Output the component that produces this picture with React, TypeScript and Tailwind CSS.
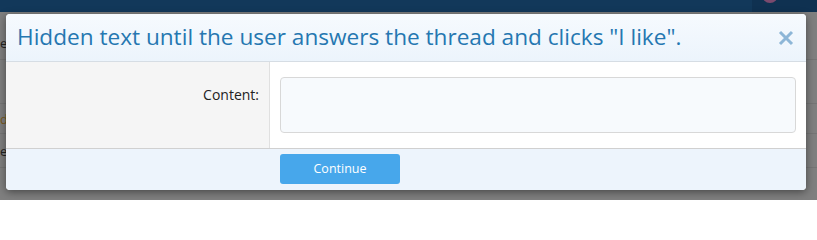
import React from "react";

export default function App() {
  return (
    <div
      className="relative w-[817px] h-[200px] overflow-hidden bg-[#7f7f7f]"
      style={{ fontFamily: '"Open Sans", "Noto Sans", sans-serif' }}
    >
      {/* dimmed page behind */}
      <div className="flex h-[12px] bg-[#12385a]">
        <div className="flex-1" />
        <div className="relative w-[65px] bg-[#0f3151]">
          <div className="absolute left-[10px] top-[-13px] h-[16px] w-[16px] rounded-full bg-[#7b4a6e]" />
        </div>
      </div>
      <div className="flex flex-col text-[13px] text-[#222]">
        <div className="h-[48px] border-b border-[#757575] pt-[22px] leading-[18px]">e</div>
        <div className="h-[44px] border-b border-[#757575]" />
        <div className="h-[30px] border-b border-[#757575] leading-[30px] text-[#7a5a20]">d</div>
        <div className="h-[34px] border-b border-[#757575] pt-[8px] leading-[18px]">e</div>
      </div>

      {/* modal overlay */}
      <div className="absolute left-[6px] top-[14px] flex h-[176px] w-[800px] flex-col overflow-hidden rounded-[4px] bg-white shadow-[0_2px_8px_rgba(0,0,0,0.45)]">
        <div className="flex h-[48px] shrink-0 items-center justify-between border-b border-[#d6dde4] bg-gradient-to-b from-[#f6fafe] to-[#ecf4fc] pl-[11px] pr-[12px]">
          <div className="text-[22.6px] leading-none text-[#2577b1]">
            Hidden text until the user answers the thread and clicks "I like".
          </div>
          <svg width="16" height="16" viewBox="0 0 16 16" className="mt-[1px]">
            <path d="M2 2 L14 14 M14 2 L2 14" stroke="#8db6d7" strokeWidth="3" strokeLinecap="butt" />
          </svg>
        </div>
        <div className="flex h-[87px] shrink-0 border-b border-[#d0d0d0]">
          <div className="flex w-[264px] shrink-0 justify-end border-r border-[#e0e0e0] bg-[#f5f5f5] pr-[10px] pt-[24px]">
            <span className="text-[14px] leading-[18px] text-[#222]">Content:</span>
          </div>
          <div className="flex-1 pl-[10px] pr-[10px] pt-[15px]">
            <div className="h-[56px] w-full rounded-[4px] border border-[#d8d8d8] bg-[#f7fafd]" />
          </div>
        </div>
        <div className="flex flex-1 bg-[#edf4fc] pl-[274px] pt-[5px]">
          <button className="h-[30px] w-[120px] rounded-[3px] bg-[#47a7eb] text-[12.5px] text-white">
            Continue
          </button>
        </div>
      </div>
    </div>
  );
}
